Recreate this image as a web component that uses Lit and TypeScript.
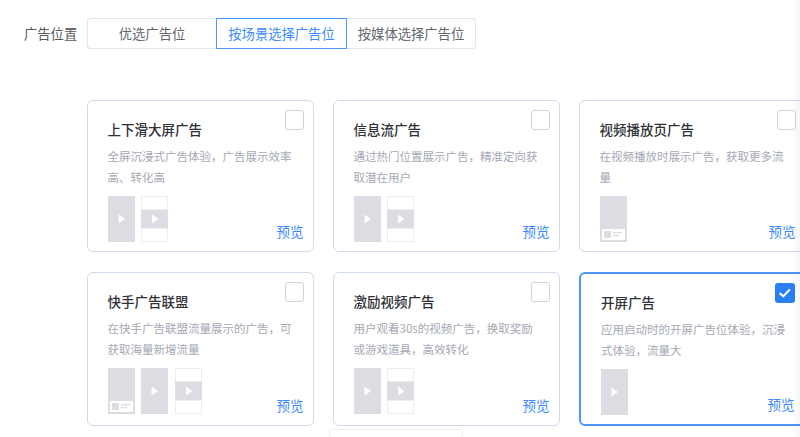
import { LitElement, html, css, svg } from "lit";
import { customElement } from "lit/decorators.js";

type Thumb = "full" | "mid" | "ad";
interface Card { title: string; desc: string[]; thumbs: Thumb[]; selected?: boolean }

const cards: Card[] = [
  { title: "上下滑大屏广告", desc: ["全屏沉浸式广告体验，广告展示效率", "高、转化高"], thumbs: ["full", "mid"] },
  { title: "信息流广告", desc: ["通过热门位置展示广告，精准定向获", "取潜在用户"], thumbs: ["full", "mid"] },
  { title: "视频播放页广告", desc: ["在视频播放时展示广告，获取更多流", "量"], thumbs: ["ad"] },
  { title: "快手广告联盟", desc: ["在快手广告联盟流量展示的广告，可", "获取海量新增流量"], thumbs: ["ad", "full", "mid"] },
  { title: "激励视频广告", desc: ["用户观看30s的视频广告，换取奖励", "或游戏道具，高效转化"], thumbs: ["full", "mid"] },
  { title: "开屏广告", desc: ["应用启动时的开屏广告位体验，沉浸", "式体验，流量大"], thumbs: ["full"], selected: true },
];

const thumb = (t: Thumb) => {
  if (t === "full")
    return svg`<svg class="thumb" viewBox="0 0 27 46"><rect width="27" height="46" fill="#dcdde2"/><path d="M10.5 18.5 L17 23 L10.5 27.5Z" fill="#fff"/></svg>`;
  if (t === "mid")
    return svg`<svg class="thumb" viewBox="0 0 27 46"><rect x=".5" y=".5" width="26" height="45" fill="#fff" stroke="#ecedf0"/><rect y="13.5" width="27" height="19" fill="#dcdde2"/><path d="M11 18.5 L17.5 23 L11 27.5Z" fill="#fff"/></svg>`;
  return svg`<svg class="thumb" viewBox="0 0 27 46"><rect width="27" height="46" fill="#dcdde2"/><rect x="2" y="33" width="23" height="11" fill="#fff"/><rect x="4" y="35" width="7" height="7" fill="#dcdde2"/><rect x="13" y="36" width="9" height="1.3" fill="#dcdde2"/><rect x="13" y="39" width="6" height="1.3" fill="#dcdde2"/></svg>`;
};

@customElement("app-root")
export class AppRoot extends LitElement {
  static styles = css`
    :host {
      display: block;
      width: 800px;
      height: 437px;
      overflow: hidden;
      background: #fff;
      position: relative;
      font-family: "Noto Sans CJK SC", "Liberation Sans", sans-serif;
    }
    .filter {
      display: flex;
      align-items: center;
      padding: 18px 0 0 24px;
      height: 31px;
    }
    .label { width: 63px; font-size: 13.3px; color: #55585f; line-height: 31px; }
    .tabs { display: flex; height: 31px; }
    .tab {
      box-sizing: border-box;
      height: 31px;
      display: flex;
      align-items: center;
      justify-content: center;
      font-size: 13.3px;
      color: #63666c;
      border: 1px solid #e4e5e9;
      background: #fff;
    }
    .tab.a { width: 129px; border-radius: 4px 0 0 4px; border-right: none; }
    .tab.b { width: 131px; color: #3d8bfa; border: 1.5px solid #4c97fb; }
    .tab.c { width: 129px; border-radius: 0 4px 4px 0; border-left: none; }
    .grid {
      display: grid;
      grid-template-columns: repeat(3, 227px);
      grid-template-rows: 152px 154px;
      column-gap: 19px;
      row-gap: 20px;
      padding: 51px 0 0 87px;
      width: 800px;
      box-sizing: border-box;
    }
    .card {
      box-sizing: border-box;
      position: relative;
      border: 1.5px solid #cfdbea;
      border-radius: 6px;
      padding: 17.5px 10px 0 19.5px;
      background: #fff;
      display: flex;
      flex-direction: column;
    }
    .card.sel { border: 2px solid #4c97fb; padding-left: 20px; padding-top: 17.5px; }
    .title { font-size: 13.5px; font-weight: 500; color: #2f3136; line-height: 20px; }
    .desc { margin-top: 7px; font-size: 11.5px; line-height: 21px; color: #a5a8b4; white-space: nowrap; }
    .thumbs { display: flex; gap: 6.5px; margin-top: 8px; }
    .thumb { width: 27px; height: 46px; display: block; flex: none; }
    .check {
      position: absolute;
      top: 9px;
      right: 9px;
      width: 19.5px;
      height: 19.5px;
      box-sizing: border-box;
      border: 1.5px solid #d2d3d8;
      border-radius: 3px;
      background: #fff;
    }
    .sel .check { top: 9px; right: 9.5px; border: none; background: #2a7ff7; }
    .check svg { display: block; width: 19.5px; height: 19.5px; }
    .preview {
      position: absolute;
      right: 9.5px;
      bottom: 11px;
      font-size: 13.5px;
      line-height: 18px;
      color: #3d8bfa;
    }
    .stub {
      position: absolute;
      left: 329px;
      top: 428.5px;
      width: 134px;
      height: 20px;
      box-sizing: border-box;
      border: 1px solid #eff0f2;
      border-radius: 3px;
    }
    .edge {
      position: absolute;
      top: 0;
      right: 0;
      bottom: 0;
      width: 9px;
      background: linear-gradient(to right, rgba(0, 0, 0, 0), rgba(0, 0, 0, 0.035));
      pointer-events: none;
    }
  `;

  render() {
    return html`
      <div class="filter">
        <div class="label">广告位置</div>
        <div class="tabs">
          <div class="tab a">优选广告位</div>
          <div class="tab b">按场景选择广告位</div>
          <div class="tab c">按媒体选择广告位</div>
        </div>
      </div>
      <div class="grid">
        ${cards.map(
          (c) => html`
            <div class="card ${c.selected ? "sel" : ""}">
              <div class="title">${c.title}</div>
              <div class="desc">${c.desc.map((l) => html`<div>${l}</div>`)}</div>
              <div class="thumbs">${c.thumbs.map(thumb)}</div>
              <div class="check">
                ${c.selected
                  ? html`<svg viewBox="0 0 19 19"><path d="M4.5 9.8 L8 13 L14.5 6.2" fill="none" stroke="#fff" stroke-width="2"/></svg>`
                  : ""}
              </div>
              <div class="preview">预览</div>
            </div>
          `
        )}
      </div>
      <div class="stub"></div>
      <div class="edge"></div>
    `;
  }
}
